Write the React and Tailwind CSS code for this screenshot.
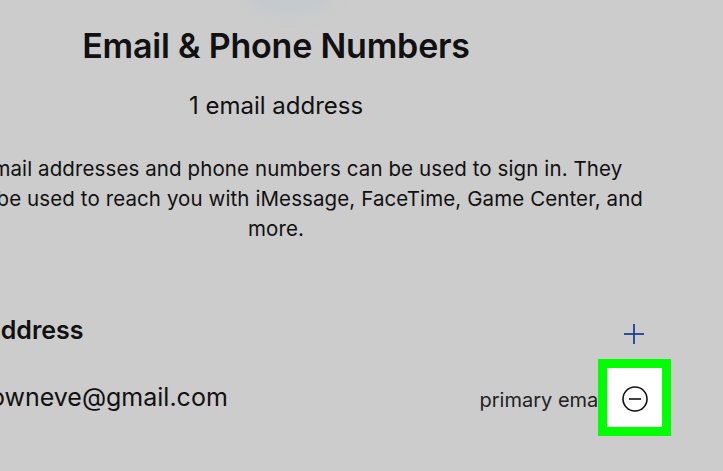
const FONT = { fontFamily: 'Inter, "Liberation Sans", Arial, sans-serif' };

export default function App() {
  return (
    <div className="relative w-[723px] h-[471px] overflow-hidden bg-[#cccccc] text-[#111111]" style={FONT}>
      {/* blurred avatar bottom peeking from top */}
      <div className="absolute left-[245px] -top-[42px] w-[90px] h-[52px] rounded-full bg-[#c2c9cf] blur-[8px]" />

      <div className="relative -ml-[150px] w-[852px] flex flex-col items-center">
        <h1 className="mt-[26px] text-[34px] leading-[40px] font-semibold tracking-[-0.2px]">
          Email &amp; Phone Numbers
        </h1>
        <p className="mt-[25px] text-[24px] leading-[30px]">1 email address</p>
        <p className="mt-[33px] text-center text-[20.5px] leading-[30px] tracking-[0.1px] whitespace-nowrap">
          Your email addresses and phone numbers can be used to sign in. They
          <br />
          can also be used to reach you with iMessage, FaceTime, Game Center, and
          <br />
          more.
        </p>

        <div className="mt-[67px] w-full pl-[65px] pr-[68px]">
          <div className="flex items-center justify-between h-[40px]">
            <span className="text-[25px] font-semibold">Email address</span>
            <svg width="22" height="22" viewBox="0 0 22 22" fill="none" stroke="#1f3f95" strokeWidth="1.8" className="mr-[-11px] mt-[6px]">
              <line x1="11" y1="1" x2="11" y2="21" />
              <line x1="1" y1="11" x2="21" y2="11" />
            </svg>
          </div>
          <div className="mt-[27px] flex items-center justify-between h-[40px]">
            <span className="text-[25px]">johnbrowneve@gmail.com</span>
            <span className="mr-[26px] mt-[4px] text-[20px] text-[#222222]">primary email</span>
          </div>
        </div>
      </div>

      {/* highlighted remove button */}
      <div className="absolute left-[598px] top-[359px] w-[73px] h-[77px] border-[9px] border-[#00ff00] bg-white flex items-center justify-center">
        <svg width="28" height="28" viewBox="0 0 28 28" fill="none" stroke="#111111" strokeWidth="1.6" className="mt-[2px]">
          <circle cx="14" cy="14" r="12" />
          <line x1="8" y1="14" x2="20" y2="14" />
        </svg>
      </div>
    </div>
  );
}
